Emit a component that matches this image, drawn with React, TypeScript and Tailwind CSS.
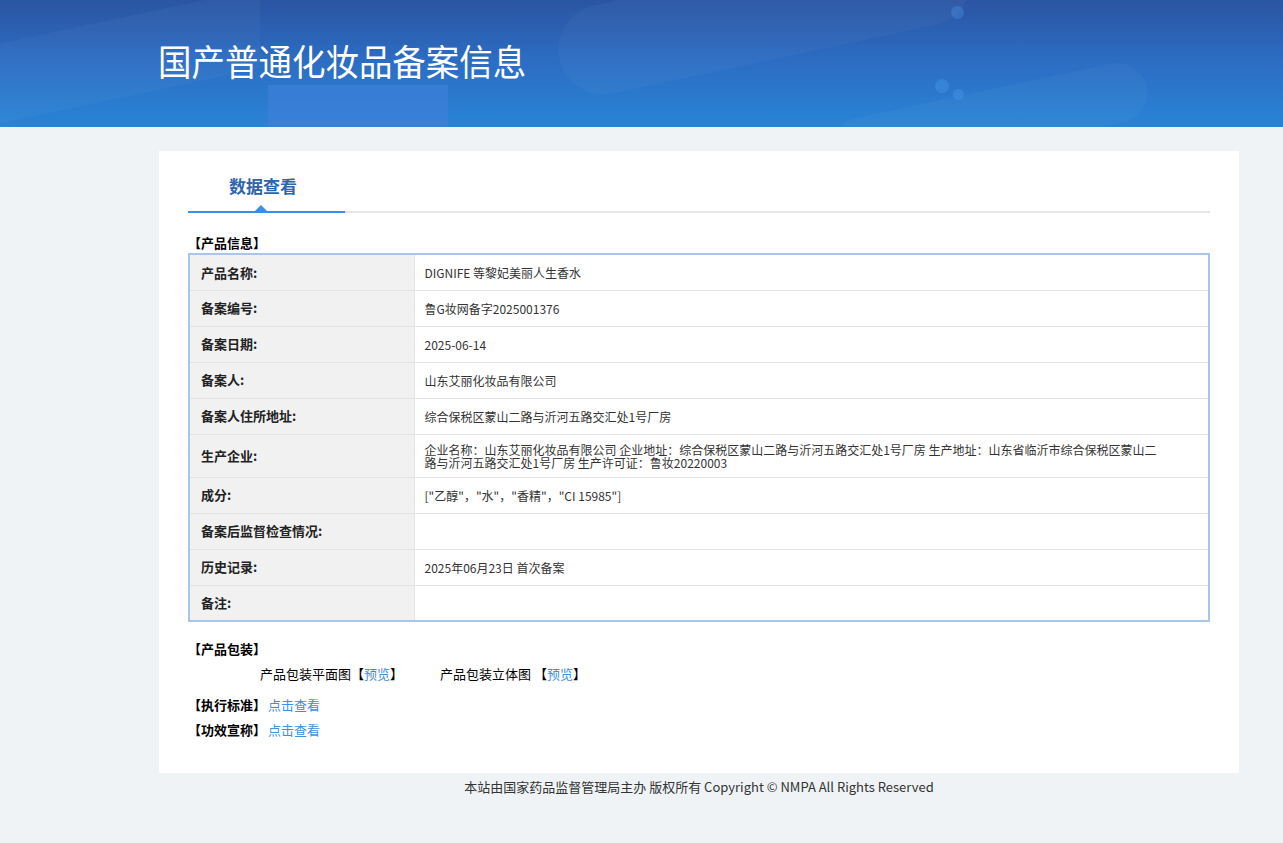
import React from "react";

const rows: { label: string; value: string; tall?: boolean }[] = [
  { label: "产品名称:", value: "DIGNIFE 等黎妃美丽人生香水" },
  { label: "备案编号:", value: "鲁G妆网备字2025001376" },
  { label: "备案日期:", value: "2025-06-14" },
  { label: "备案人:", value: "山东艾丽化妆品有限公司" },
  { label: "备案人住所地址:", value: "综合保税区蒙山二路与沂河五路交汇处1号厂房" },
  {
    label: "生产企业:",
    value:
      "企业名称：山东艾丽化妆品有限公司 企业地址：综合保税区蒙山二路与沂河五路交汇处1号厂房 生产地址：山东省临沂市综合保税区蒙山二路与沂河五路交汇处1号厂房 生产许可证：鲁妆20220003",
    tall: true,
  },
  { label: "成分:", value: "[\"乙醇\"，\"水\"，\"香精\"，\"CI 15985\"]" },
  { label: "备案后监督检查情况:", value: "" },
  { label: "历史记录:", value: "2025年06月23日 首次备案" },
  { label: "备注:", value: "" },
];

export default function App() {
  return (
    <div
      className="min-h-[843px] bg-[#eff3f6] text-[#333]"
      style={{ fontFamily: '"Noto Sans CJK SC", "Noto Sans", sans-serif' }}
    >
      {/* Header */}
      <header className="relative h-[127px] overflow-hidden bg-gradient-to-b from-[#2a55a3] via-[#2c6ec4] to-[#2884d6]">
        <div className="absolute left-[268px] top-[85px] h-[60px] w-[180px] bg-[#3f7fd8] opacity-70" />
        <div className="absolute left-[-40px] top-[20px] h-[80px] w-[300px] -skew-y-12 bg-white/[0.03]" />
        <div className="absolute left-[555px] top-[-30px] h-[90px] w-[420px] -rotate-12 rounded-full bg-white/[0.03]" />
        <div className="absolute left-[830px] top-[90px] h-[60px] w-[320px] -rotate-12 rounded-full bg-white/[0.03]" />
        <div className="absolute left-[951px] top-[6px] h-[13px] w-[13px] rounded-full bg-[#4a8fe0] opacity-40" />
        <div className="absolute left-[935px] top-[79px] h-[14px] w-[14px] rounded-full bg-[#3d8ce2] opacity-60" />
        <div className="absolute left-[953px] top-[89px] h-[11px] w-[11px] rounded-full bg-[#3d8ce2] opacity-70" />
        <div className="relative ml-[158px] pt-[38px]">
          <h1 className="inline-block origin-left scale-x-[0.93] text-[36px] font-normal leading-[44px] text-white">
            国产普通化妆品备案信息
          </h1>
        </div>
      </header>

      {/* Card */}
      <main className="ml-[159px] mt-[24px] w-[1080px] bg-white px-[29px] pb-[34px]">
        <div className="flex h-[62px] border-b-2 border-[#e6e6e6]">
          <div className="relative -mb-[2px] flex w-[157px] items-center justify-center border-b-2 border-[#3a8ee6] pt-[9px]">
            <span className="pr-[7px] text-[17px] font-bold text-[#2d64ac]">数据查看</span>
            <span className="absolute bottom-0 left-[67px] h-0 w-0 border-x-[6px] border-b-[6px] border-x-transparent border-b-[#3a8ee6]" />
          </div>
        </div>

        <div className="mt-[20px] text-[13px] font-bold leading-[20px] text-black">【产品信息】</div>

        <table className="w-full border-collapse border-2 border-[#a9c5ea] text-[12px]">
          <tbody>
            {rows.map((r) => (
              <tr key={r.label} className={r.tall ? "h-[43px]" : "h-[36px]"}>
                <td className="w-[225px] border-b border-r border-[#e3e3e3] bg-[#f1f1f1] pl-[11px] text-[13px] font-bold text-[#222]">
                  {r.label}
                </td>
                <td className="border-b border-[#e3e3e3] pl-[10px] pr-[48px] leading-[13px] text-[#333]">
                  {r.value}
                </td>
              </tr>
            ))}
          </tbody>
        </table>

        <div className="mt-[18px] flex flex-col text-[13px] leading-[18px] text-black">
          <div className="font-bold">【产品包装】</div>
          <div className="mt-[7px] flex gap-[37px] pl-[72px]">
            <span>
              产品包装平面图【<span className="text-[#3d8fe0]">预览</span>】
            </span>
            <span>
              产品包装立体图 【<span className="text-[#3d8fe0]">预览</span>】
            </span>
          </div>
          <div className="mt-[13px] flex gap-[2px]">
            <span className="font-bold">【执行标准】</span>
            <span className="text-[#3d8fe0]">点击查看</span>
          </div>
          <div className="mt-[7px] flex gap-[2px]">
            <span className="font-bold">【功效宣称】</span>
            <span className="text-[#3d8fe0]">点击查看</span>
          </div>
        </div>
      </main>

      <footer className="ml-[159px] w-[1080px] pt-[5px] text-center text-[13px] leading-[18px] text-[#333]">
        本站由国家药品监督管理局主办 版权所有 Copyright © NMPA All Rights Reserved
      </footer>
    </div>
  );
}
